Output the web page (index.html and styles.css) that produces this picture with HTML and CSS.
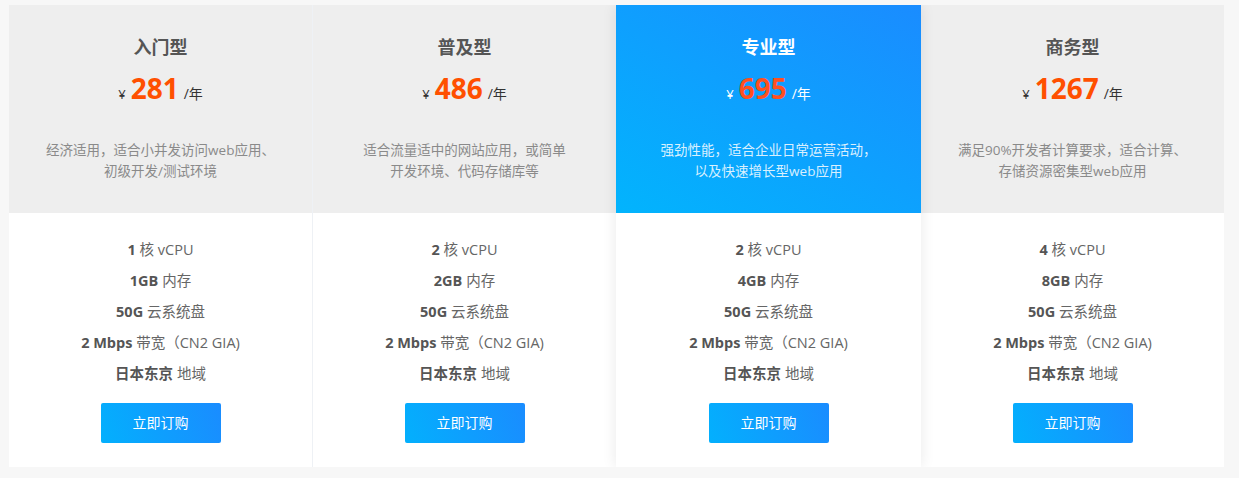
FILE: index.html
```html
<!DOCTYPE html>
<html lang="zh-CN">
<head>
<meta charset="utf-8">
<title>价格</title>
<link rel="stylesheet" href="styles.css">
</head>
<body>
<div class="plans">
  <div class="plan">
    <div class="plan-head">
      <h3 class="plan-title">入门型</h3>
      <div class="price"><span class="cur">¥</span><span class="num">281</span><span class="unit">/年</span></div>
      <p class="desc">经济适用，适合小并发访问web应用、<br>初级开发/测试环境</p>
    </div>
    <div class="plan-body">
      <ul class="specs">
        <li><b>1</b> 核 vCPU</li>
        <li><b>1GB</b> 内存</li>
        <li><b>50G</b> 云系统盘</li>
        <li><b>2 Mbps</b> 带宽（CN2 GIA)</li>
        <li><b>日本东京</b> 地域</li>
      </ul>
      <a class="buy" href="#">立即订购</a>
    </div>
  </div>
  <div class="plan">
    <div class="plan-head">
      <h3 class="plan-title">普及型</h3>
      <div class="price"><span class="cur">¥</span><span class="num">486</span><span class="unit">/年</span></div>
      <p class="desc">适合流量适中的网站应用，或简单<br>开发环境、代码存储库等</p>
    </div>
    <div class="plan-body">
      <ul class="specs">
        <li><b>2</b> 核 vCPU</li>
        <li><b>2GB</b> 内存</li>
        <li><b>50G</b> 云系统盘</li>
        <li><b>2 Mbps</b> 带宽（CN2 GIA)</li>
        <li><b>日本东京</b> 地域</li>
      </ul>
      <a class="buy" href="#">立即订购</a>
    </div>
  </div>
  <div class="plan featured">
    <div class="plan-head">
      <h3 class="plan-title">专业型</h3>
      <div class="price"><span class="cur">¥</span><span class="num">695</span><span class="unit">/年</span></div>
      <p class="desc">强劲性能，适合企业日常运营活动，<br>以及快速增长型web应用</p>
    </div>
    <div class="plan-body">
      <ul class="specs">
        <li><b>2</b> 核 vCPU</li>
        <li><b>4GB</b> 内存</li>
        <li><b>50G</b> 云系统盘</li>
        <li><b>2 Mbps</b> 带宽（CN2 GIA)</li>
        <li><b>日本东京</b> 地域</li>
      </ul>
      <a class="buy" href="#">立即订购</a>
    </div>
  </div>
  <div class="plan">
    <div class="plan-head">
      <h3 class="plan-title">商务型</h3>
      <div class="price"><span class="cur">¥</span><span class="num">1267</span><span class="unit">/年</span></div>
      <p class="desc">满足90%开发者计算要求，适合计算、<br>存储资源密集型web应用</p>
    </div>
    <div class="plan-body">
      <ul class="specs">
        <li><b>4</b> 核 vCPU</li>
        <li><b>8GB</b> 内存</li>
        <li><b>50G</b> 云系统盘</li>
        <li><b>2 Mbps</b> 带宽（CN2 GIA)</li>
        <li><b>日本东京</b> 地域</li>
      </ul>
      <a class="buy" href="#">立即订购</a>
    </div>
  </div>
</div>
</body>
</html>
```

FILE: styles.css
```css
* { box-sizing: border-box; }
html, body { background: #f7f7f7; }
body {
  margin: 5px 15px 0 9px;
  font-family: "Open Sans", "Noto Sans CJK SC", sans-serif;
  color: #666;
}
.plans {
  display: grid;
  grid-template-columns: 304px 303px 305px 303px;
}
.plan {
  display: flex;
  flex-direction: column;
  background: #fff;
  position: relative;
}
.plan:first-child { border-right: 1px solid #eef1f5; }
.plan-head {
  background: #eeeeee;
  text-align: center;
  padding: 30px 20px 0;
  height: 208px;
}
.plan-title {
  margin: 0;
  font-size: 18px;
  line-height: 24px;
  font-weight: 700;
  color: #555;
}
.price {
  margin-top: 11px;
  height: 36px;
  display: flex;
  align-items: baseline;
  justify-content: center;
  gap: 5px;
  color: #333;
}
.cur { font-size: 13px; }
.num {
  font-size: 28px;
  line-height: 36px;
  font-weight: 700;
  color: #ff5000;
}
.unit { font-size: 14px; }
.desc {
  margin: 34px 0 0;
  font-size: 13.5px;
  line-height: 21px;
  color: #8a8a8a;
}
.featured { z-index: 1; box-shadow: 0 0 14px rgba(0, 0, 0, 0.09); }
.featured .plan-head {
  background: linear-gradient(30deg, #02b4fd 0%, #1a8cff 100%);
}
.featured .plan-title, .featured .price { color: #fff; }
.featured .num { color: #ff5020; }
.featured .desc { color: rgba(255, 255, 255, 0.85); }
.plan-body {
  padding: 21px 0 24px;
  text-align: center;
  flex: 1;
}
.specs {
  list-style: none;
  margin: 0;
  padding: 0;
  font-size: 14.5px;
  line-height: 31px;
  color: #666;
}
.specs b { color: #555; font-weight: 700; }
.buy {
  display: inline-block;
  margin-top: 14px;
  width: 120px;
  height: 40px;
  line-height: 40px;
  border-radius: 2px;
  background: linear-gradient(70deg, #03b0fd 0%, #1a8cff 100%);
  color: #fff;
  font-size: 14px;
  text-decoration: none;
}
```
